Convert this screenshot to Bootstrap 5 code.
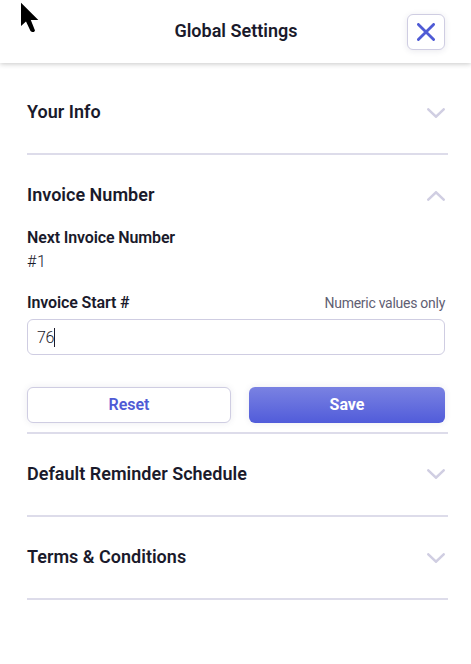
<!DOCTYPE html>
<html lang="en">
<head>
<meta charset="utf-8">
<meta name="viewport" content="width=device-width, initial-scale=1">
<title>Global Settings</title>
<link href="https://cdn.jsdelivr.net/npm/bootstrap@5.3.0/dist/css/bootstrap.min.css" rel="stylesheet">
<style>
body{font-family:Roboto,"Liberation Sans",sans-serif;font-size:16px;color:#1a1a2b;background:#fff;overflow:hidden}
.top-bar{height:63px;padding:0 26px 0 27px;box-shadow:0 1px 5px rgba(0,0,0,.22)}
.top-bar .side{width:38px}
.heading{font-size:18px;font-weight:600;line-height:24px;margin:0;padding-bottom:2px;letter-spacing:.01px}
.close-btn{width:38px;height:36px;margin-top:1px;padding:0;border:1px solid #cfcde2;border-radius:6px;background:#fff;box-shadow:0 1px 6px rgba(40,40,90,.1)}
.panels{padding:9px 23px 0 27px}
.panel{border-bottom:2px solid #dddcea}
.panel-head{height:81px;padding-right:3px}
.panel-head svg{margin-top:1px}
.panel-head .raised{margin-top:-1px}
.panel-body{padding:0 3px 9px 0;margin-top:-10px}
.field-label{font-weight:600;line-height:24px;letter-spacing:-.13px}
.plain-value{font-weight:350;letter-spacing:.6px}
.label-row{margin-top:17px}
.hint{font-size:14px;color:#5f6073;line-height:24px;letter-spacing:-.27px}
.number-box{height:36px;padding:1px 9px 0;border:1px solid #cfcde2;border-radius:6px}
.number-box .typed{font-weight:350;letter-spacing:-.3px}
.caret{width:1px;height:19px;background:#1a1a2b}
.actions{gap:18px;margin-top:32px}
.actions .btn{height:36px;padding:0;font-weight:600;line-height:34px;border-radius:6px;box-shadow:0 0 7px rgba(40,40,90,.09)}
.btn-reset{width:204px;border:1px solid #cfcde2;color:#4f5bd5;background:#fff}
.actions .btn-save{width:196px;border:0;color:#fff;font-weight:700;background:linear-gradient(#7a82e2,#515cda)}
.pointer{left:21px;top:2px}
</style>
<script src="https://cdn.jsdelivr.net/npm/bootstrap@5.3.0/dist/js/bootstrap.bundle.min.js"></script>
</head>
<body>
<header class="top-bar d-flex align-items-center justify-content-between bg-white">
  <span class="side"></span>
  <h1 class="heading">Global Settings</h1>
  <button class="close-btn d-flex align-items-center justify-content-center" type="button" aria-label="Close">
    <svg width="18" height="18" viewBox="0 0 18 18" fill="none" stroke="#4f5bd5" stroke-width="2.8" stroke-linecap="round"><path d="M1.4 1.4 16.6 16.6M16.6 1.4 1.4 16.6"/></svg>
  </button>
</header>
<main class="panels">
  <section class="panel">
    <div class="panel-head d-flex align-items-center justify-content-between">
      <h2 class="heading">Your Info</h2>
      <svg width="18" height="10" viewBox="0 0 18 10" fill="none" stroke="#d0cee2" stroke-width="2.5" stroke-linecap="round"><path d="M1.3 1.3 9 8.7 16.7 1.3"/></svg>
    </div>
  </section>
  <section class="panel">
    <div class="panel-head d-flex align-items-center justify-content-between">
      <h2 class="heading">Invoice Number</h2>
      <svg width="18" height="10" viewBox="0 0 18 10" fill="none" stroke="#d0cee2" stroke-width="2.5" stroke-linecap="round"><path d="M1.3 8.7 9 1.3 16.7 8.7"/></svg>
    </div>
    <div class="panel-body">
      <div class="field-label">Next Invoice Number</div>
      <div class="plain-value lh-base">#1</div>
      <div class="label-row d-flex justify-content-between">
        <span class="field-label">Invoice Start #</span>
        <span class="hint">Numeric values only</span>
      </div>
      <div class="number-box d-flex align-items-center mt-1"><span class="typed">76</span><span class="caret"></span></div>
      <div class="actions d-flex">
        <button class="btn btn-reset" type="button">Reset</button>
        <button class="btn btn-save" type="button">Save</button>
      </div>
    </div>
  </section>
  <section class="panel">
    <div class="panel-head d-flex align-items-center justify-content-between">
      <h2 class="heading">Default Reminder Schedule</h2>
      <svg class="raised" width="18" height="10" viewBox="0 0 18 10" fill="none" stroke="#d0cee2" stroke-width="2.5" stroke-linecap="round"><path d="M1.3 1.3 9 8.7 16.7 1.3"/></svg>
    </div>
  </section>
  <section class="panel">
    <div class="panel-head d-flex align-items-center justify-content-between">
      <h2 class="heading">Terms &amp; Conditions</h2>
      <svg width="18" height="10" viewBox="0 0 18 10" fill="none" stroke="#d0cee2" stroke-width="2.5" stroke-linecap="round"><path d="M1.3 1.3 9 8.7 16.7 1.3"/></svg>
    </div>
  </section>
</main>
<svg class="pointer position-absolute" width="18" height="31" viewBox="0 0 18 31" fill="#000"><path d="M0 .8V24L5 19.5 9.5 29 11 30H13L14 28.5 9.8 18H17.3Z"/></svg>
</body>
</html>
